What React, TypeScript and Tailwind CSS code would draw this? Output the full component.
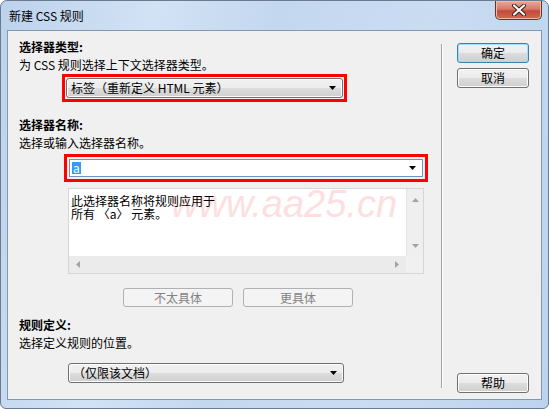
import React from "react";

const Arrow = ({ dir = "down", color = "#000" }: { dir?: "down" | "up" | "left" | "right"; color?: string }) => {
  if (dir === "left" || dir === "right") {
    return (
      <svg width="4" height="7" viewBox="0 0 4 7">
        <path d={dir === "left" ? "M4 0v7L0 3.5z" : "M0 0v7L4 3.5z"} fill={color} />
      </svg>
    );
  }
  return (
    <svg width="7" height="4" viewBox="0 0 7 4">
      <path d={dir === "down" ? "M0 0h7L3.5 4z" : "M0 4h7L3.5 0z"} fill={color} />
    </svg>
  );
};

const btnFace =
  "bg-[linear-gradient(#f2f2f2_0%,#ebebeb_50%,#dddddd_50%,#cfcfcf_100%)] shadow-[inset_0_0_0_1px_#fcfcfc]";

const WinButton = ({ children, focused }: { children: React.ReactNode; focused?: boolean }) => (
  <div
    className={`w-[72px] h-[20px] flex items-center justify-center rounded-[3px] border leading-none ${btnFace} ${
      focused ? "border-[#3c7fb1] !shadow-[inset_0_0_0_1px_#9fe0f8]" : "border-[#707070]"
    }`}
  >
    {children}
  </div>
);

const DisabledButton = ({ children }: { children: React.ReactNode }) => (
  <div className="w-[110px] h-[19px] flex items-center justify-center rounded-[3px] border border-[#adb2b5] bg-[#f4f4f4] text-[#838383] leading-none">
    {children}
  </div>
);

const Combo = ({ children, className = "" }: { children: React.ReactNode; className?: string }) => (
  <div
    className={`h-[20px] flex items-center justify-between rounded-[3px] border border-[#707070] pl-[4px] pr-[6px] leading-none ${btnFace} ${className}`}
  >
    <span>{children}</span>
    <Arrow />
  </div>
);

const CloseButton = () => (
  <div className="w-[47px] h-[19px] flex items-center justify-center rounded-b-[5px] border border-t-0 border-[#6e2f2a] bg-[linear-gradient(#e9a99b_0%,#d7786a_45%,#c24b3c_55%,#cf6a4e_100%)] shadow-[inset_0_0_0_1px_#f0b9a8]">
    <svg width="14" height="12" viewBox="0 0 14 12">
      <path d="M2 1.5l10 9M12 1.5l-10 9" stroke="#3a1a16" strokeWidth="4" strokeLinecap="round" />
      <path d="M2 1.5l10 9M12 1.5l-10 9" stroke="#ffffff" strokeWidth="2.2" strokeLinecap="round" />
    </svg>
  </div>
);

const App = () => {
  return (
    <div className="w-[549px] h-[409px] bg-white text-[12px] text-black font-['Noto_Sans_CJK_SC',sans-serif]">
      <div className="w-full h-full flex flex-col border border-[#6b7b8f] rounded-t-[7px] rounded-b-[6px] overflow-hidden bg-[linear-gradient(100deg,#bcd2ec_0%,#d2e2f5_25%,#c3d7ef_45%,#cadcf2_70%,#bdd3ed_100%)]">
        {/* title bar */}
        <div className="h-[29px] flex items-start justify-between pl-[8px] pr-[6px]">
          <span className="leading-[29px]">新建 CSS 规则</span>
          <CloseButton />
        </div>

        {/* panel */}
        <div className="mx-[6px] h-[370px] border border-[#8397af] bg-[#f0f0f0] flex">
          {/* left column */}
          <div className="w-[433px] pl-[11px] pt-[7px] flex flex-col leading-[18px]">
            <div className="font-bold">选择器类型:</div>
            <div>为 CSS 规则选择上下文选择器类型。</div>
            <div className="ml-[43px] w-[285px] h-[28px] border-[3px] border-[#ff0000] p-[1px]">
              <Combo>标签（重新定义 HTML 元素）</Combo>
            </div>

            <div className="mt-[14px] font-bold">选择器名称:</div>
            <div>选择或输入选择器名称。</div>
            <div className="mt-[2px] ml-[45px] w-[364px] h-[28px] border-[3px] border-[#ff0000] p-[2px]">
              <div className="h-full flex items-center justify-between border border-[#7092be] bg-white pl-[2px] pr-[6px]">
                <span className="bg-[#3399ff] text-white leading-[12px] px-[1px]">a</span>
                <Arrow />
              </div>
            </div>

            {/* text area */}
            <div className="relative mt-[6px] ml-[49px] w-[356px] h-[86px] border border-[#d6d6d6] flex flex-col bg-white">
              <div className="flex-1 flex">
                <div className="flex-1 relative">
                  <span className="absolute left-[102px] top-[-4px] text-[38px] leading-none italic text-[#fddfdf] font-['Liberation_Sans',sans-serif] whitespace-nowrap pointer-events-none">
                    www.aa25.cn
                  </span>
                  <div className="relative pl-[2px] pt-[5px] leading-[13px]">
                    此选择器名称将规则应用于
                    <br />
                    所有 〈a〉 元素。
                  </div>
                </div>
                <div className="w-[17px] bg-[#efefef] border-l border-[#e4e4e4] flex flex-col items-center justify-between pt-[9px] pb-[8px]">
                  <Arrow dir="up" color="#a3a3a3" />
                  <Arrow dir="down" color="#a3a3a3" />
                </div>
              </div>
              <div className="h-[17px] flex">
                <div className="flex-1 bg-[#ebebeb] flex items-center justify-between pl-[7px] pr-[7px]">
                  <Arrow dir="left" color="#a3a3a3" />
                  <Arrow dir="right" color="#a3a3a3" />
                </div>
                <div className="w-[17px] bg-[#f0f0f0]" />
              </div>
            </div>

            <div className="mt-[14px] ml-[104px] flex gap-[10px]">
              <DisabledButton>不太具体</DisabledButton>
              <DisabledButton>更具体</DisabledButton>
            </div>

            <div className="mt-[9px] font-bold">规则定义:</div>
            <div>选择定义规则的位置。</div>
            <Combo className="mt-[11px] ml-[49px] w-[276px]">（仅限该文档）</Combo>
          </div>

          {/* divider */}
          <div className="mt-[13px] mb-[11px] flex">
            <div className="w-px bg-[#a0a0a0]" />
            <div className="w-px bg-white" />
          </div>

          {/* right column */}
          <div className="flex-1 pl-[14px] pt-[12px] pb-[6px] flex flex-col gap-[5px]">
            <WinButton focused>确定</WinButton>
            <WinButton>取消</WinButton>
            <div className="mt-auto">
              <WinButton>帮助</WinButton>
            </div>
          </div>
        </div>
      </div>
    </div>
  );
};

export default App;
